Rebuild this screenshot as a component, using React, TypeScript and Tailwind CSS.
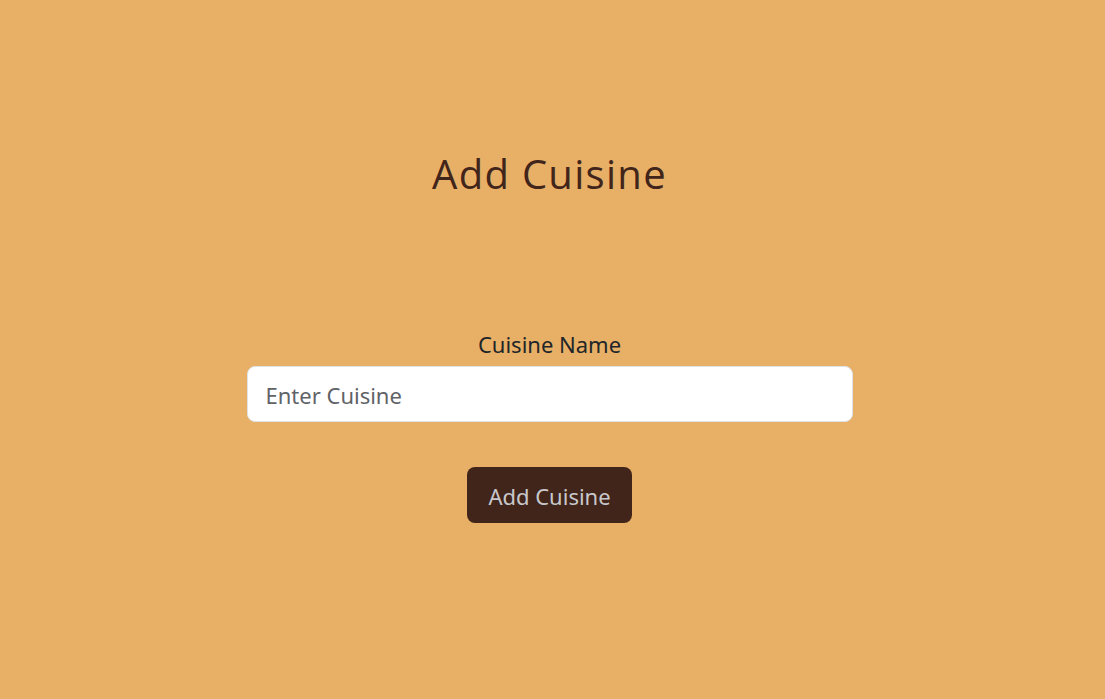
import React from 'react';

export default function App() {
    return (
        <div className="min-h-[699px] w-full bg-[#e8af66] flex flex-col items-center pr-[6px] font-['Noto_Sans',sans-serif]">
            <h1 className="mt-[150px] text-[40px] leading-[48px] tracking-[1.3px] text-[#42251a] font-['Open_Sans',sans-serif] font-normal">
                Add Cuisine
            </h1>

            <form className="mt-[131px] w-[606px] flex flex-col items-center" onSubmit={(e) => e.preventDefault()}>
                <label htmlFor="cuisine" className="text-[22px] leading-[30px] text-[#212529] mb-[7px]">
                    Cuisine Name
                </label>
                <input
                    id="cuisine"
                    type="text"
                    placeholder="Enter Cuisine"
                    className="w-full h-[56px] rounded-lg border border-[#dee2e6] bg-white px-[18px] pt-[2px] text-[22px] text-[#212529] placeholder:text-[#5f6368] outline-none"
                />
                <button
                    type="submit"
                    className="mt-[45px] h-[56px] px-[21px] pt-[2px] rounded-lg bg-[#42251a] text-[22px] text-[#c8c8cc]"
                >
                    Add Cuisine
                </button>
            </form>
        </div>
    );
}
